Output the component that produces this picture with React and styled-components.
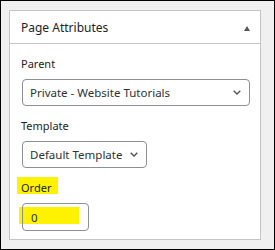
import React from 'react';
import styled, {createGlobalStyle} from 'styled-components';

const Global = createGlobalStyle`
  body {
    margin: 0;
    font-family: "Noto Sans", "Open Sans", sans-serif;
    color: #1d2327;
  }
`

const Frame = styled.div`
  box-sizing: border-box;
  width: 275px;
  height: 250px;
  border: 1px solid #000;
  background: #f0f0f1;
  padding: 9px 0 0 8px;
`

const Panel = styled.div`
  box-sizing: border-box;
  width: 252px;
  height: 230px;
  background: #fff;
  border: 1px solid #c3c4c7;
`

const Header = styled.div`
  height: 32px;
  border-bottom: 1px solid #c3c4c7;
  display: flex;
  align-items: center;
  justify-content: space-between;
  padding: 0 10px 0 11px;
  font-size: 12px;
`

const Toggle = styled.span`
  width: 0;
  height: 0;
  border-left: 3.5px solid transparent;
  border-right: 3.5px solid transparent;
  border-bottom: 5px solid #50575e;
  margin-top: 2px;
`

const Body = styled.div`
  padding: 13px 11px 0 11px;
`

const Label = styled.div`
  font-size: 11px;
  line-height: 14px;
  margin: ${p => p.$top || 0}px 0 8px 0;
`

const Marked = styled.span`
  display: inline-block;
  line-height: 12px;
  padding: 5px 7px 0 4px;
  margin-left: -4px;
  background: #fff200;
`

const SelectWrap = styled.div`
  position: relative;
  width: ${p => p.$w}px;
  margin-left: 1px;
`

const Select = styled.select`
  appearance: none;
  box-sizing: border-box;
  width: 100%;
  height: 27px;
  border: 1px solid #8c8f94;
  border-radius: 4px;
  background: #fff;
  font-family: inherit;
  font-size: 11.5px;
  color: #2c3338;
  padding: 0 22px 0 7px;
`

const Chevron = styled.svg`
  position: absolute;
  right: 9px;
  top: 11px;
  pointer-events: none;
`

const OrderWrap = styled.div`
  position: relative;
  width: 67px;
  margin-left: 1px;
`

const Mark = styled.span`
  position: absolute;
  left: -3px;
  top: 4px;
  width: 60px;
  height: 17px;
  background: #fff200;
`

const Input = styled.input`
  position: relative;
  box-sizing: border-box;
  width: 100%;
  height: 28px;
  border: 1px solid #8c8f94;
  border-radius: 4px;
  background: transparent;
  font-family: inherit;
  font-size: 11.5px;
  color: #2c3338;
  padding: 0 0 0 8px;
`

function Arrow() {
  return (
    <Chevron width="8" height="5" viewBox="0 0 8 5">
      <path d="M0.7 0.7 L4 4 L7.3 0.7" fill="none" stroke="#50575e" strokeWidth="1.4" />
    </Chevron>
  )
}

export default function App() {
  return (
    <Frame>
      <Global />
      <Panel>
        <Header>
          Page Attributes
          <Toggle />
        </Header>
        <Body>
          <Label>Parent</Label>
          <SelectWrap $w={228}>
            <Select defaultValue="p">
              <option value="p">Private - Website Tutorials</option>
            </Select>
            <Arrow />
          </SelectWrap>
          <Label $top={13}>Template</Label>
          <SelectWrap $w={125}>
            <Select defaultValue="d">
              <option value="d">Default Template</option>
            </Select>
            <Arrow />
          </SelectWrap>
          <Label $top={9}><Marked>Order</Marked></Label>
          <OrderWrap>
            <Mark />
            <Input type="text" defaultValue="0" />
          </OrderWrap>
        </Body>
      </Panel>
    </Frame>
  )
}
